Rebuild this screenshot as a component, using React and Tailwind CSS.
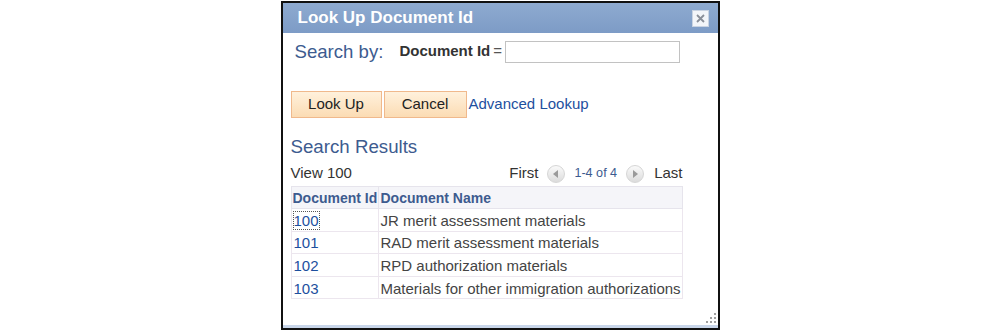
import { useState } from 'react';

const rows = [
  { id: '100', name: 'JR merit assessment materials' },
  { id: '101', name: 'RAD merit assessment materials' },
  { id: '102', name: 'RPD authorization materials' },
  { id: '103', name: 'Materials for other immigration authorizations' },
];

function ArrowButton({ dir }) {
  return (
    <span className="inline-flex h-[18px] w-[18px] items-center justify-center rounded-full border border-[#d6d6d6] bg-gradient-to-b from-[#fafafa] to-[#dcdcdc]">
      <svg width="6" height="8" viewBox="0 0 6 8">
        {dir === 'left' ? (
          <path d="M5 0 L0 4 L5 8 Z" fill="#9a9a9a" />
        ) : (
          <path d="M1 0 L6 4 L1 8 Z" fill="#9a9a9a" />
        )}
      </svg>
    </span>
  );
}

export default function App() {
  const [docId, setDocId] = useState('');

  return (
    <div className="flex h-[336px] w-[1000px] justify-center bg-white font-['Liberation_Sans',Arial,sans-serif]">
      {/* Dialog */}
      <div className="relative mt-[1px] flex h-[329px] w-[439px] flex-col border-2 border-[#111] bg-white">
        <div className="flex h-[30px] items-center justify-between bg-gradient-to-b from-[#8eaad0] to-[#7d9bc6] pl-[15px] pr-[9px]">
          <span className="text-[17px] font-bold text-white">Look Up Document Id</span>
          <button className="flex h-[17px] w-[17px] items-center justify-center border border-[#c9d3e2] bg-[#f3f5f9]">
            <svg width="9" height="9" viewBox="0 0 9 9">
              <path d="M1 1 L8 8 M8 1 L1 8" stroke="#8a8f99" strokeWidth="1.8" />
            </svg>
          </button>
        </div>

        <div className="flex flex-1 flex-col pl-[8px] pr-[36px]">
          {/* Search by */}
          <div className="mt-[7px] flex h-[23px] items-center">
            <span className="ml-[4px] text-[18.6px] text-[#3d5b8f]">Search by:</span>
            <span className="ml-[16px] text-[15px] font-bold text-[#333]">Document Id</span>
            <span className="ml-[3px] text-[15px] text-[#555]">=</span>
            <input
              value={docId}
              onChange={(e) => setDocId(e.target.value)}
              className="ml-[3px] h-[22px] w-[175px] border border-[#c2c2c2] px-1 text-[13px] outline-none"
            />
          </div>

          {/* Buttons */}
          <div className="mt-[28px] flex items-center">
            <button className="h-[27px] w-[91px] border border-[#f0b98c] bg-gradient-to-b from-[#fff1dc] to-[#fbdcb4] text-[15px] text-[#222]">
              Look Up
            </button>
            <button className="ml-[2px] h-[27px] w-[83px] border border-[#f0b98c] bg-gradient-to-b from-[#fff1dc] to-[#fbdcb4] text-[15px] text-[#222]">
              Cancel
            </button>
            <a href="#" className="ml-[2px] -mt-[1px] text-[15px] text-[#1d4f9e]">
              Advanced Lookup
            </a>
          </div>

          <div className="mt-[18px] text-[18.7px] leading-[22px] text-[#3d5b8f]">Search Results</div>

          {/* Grid */}
          <div className="mt-[5px] w-[392px]">
            <div className="flex h-[20px] items-center justify-between text-[15px] text-[#333]">
              <span>View 100</span>
              <div className="flex items-center">
                <span>First</span>
                <span className="ml-[9px]"><ArrowButton dir="left" /></span>
                <span className="ml-[9px] text-[12.6px] text-[#3d5b8f]">1-4 of 4</span>
                <span className="ml-[9px]"><ArrowButton dir="right" /></span>
                <span className="ml-[10px]">Last</span>
              </div>
            </div>
            <table className="mt-[3px] w-full table-fixed border-collapse text-[15px] leading-[18px]">
              <thead>
                <tr className="h-[22px] bg-[#f5f5f9]">
                  <th className="w-[87px] whitespace-nowrap border border-[#e6e4ec] pl-[1px] text-left text-[14px] font-bold text-[#3d5b8f]">Document Id</th>
                  <th className="whitespace-nowrap border border-[#e6e4ec] pl-[2px] text-left text-[14px] font-bold text-[#3d5b8f]">Document Name</th>
                </tr>
              </thead>
              <tbody>
                {rows.map((r, i) => (
                  <tr key={r.id} className="h-[22.6px]">
                    <td className="border border-[#ece6ee] pl-[2px] pt-[2px] text-[#1d4f9e]">
                      <a href="#" className={i === 0 ? 'outline outline-1 outline-dotted outline-[#555]' : ''}>
                        {r.id}
                      </a>
                    </td>
                    <td className="whitespace-nowrap border border-[#ece6ee] pl-[2px] pt-[2px] text-[#444]">{r.name}</td>
                  </tr>
                ))}
              </tbody>
            </table>
          </div>
        </div>

        {/* resize grip */}
        <div className="absolute bottom-[5px] right-[2px] grid grid-cols-3 gap-[2px]">
          <span />
          <span />
          <span className="h-[2px] w-[2px] bg-[#a0a0a0]" />
          <span />
          <span className="h-[2px] w-[2px] bg-[#a0a0a0]" />
          <span className="h-[2px] w-[2px] bg-[#a0a0a0]" />
          <span className="h-[2px] w-[2px] bg-[#a0a0a0]" />
          <span className="h-[2px] w-[2px] bg-[#a0a0a0]" />
          <span className="h-[2px] w-[2px] bg-[#a0a0a0]" />
        </div>
        <div className="h-[3px] bg-[#c9d6ea]" />
      </div>
    </div>
  );
}
